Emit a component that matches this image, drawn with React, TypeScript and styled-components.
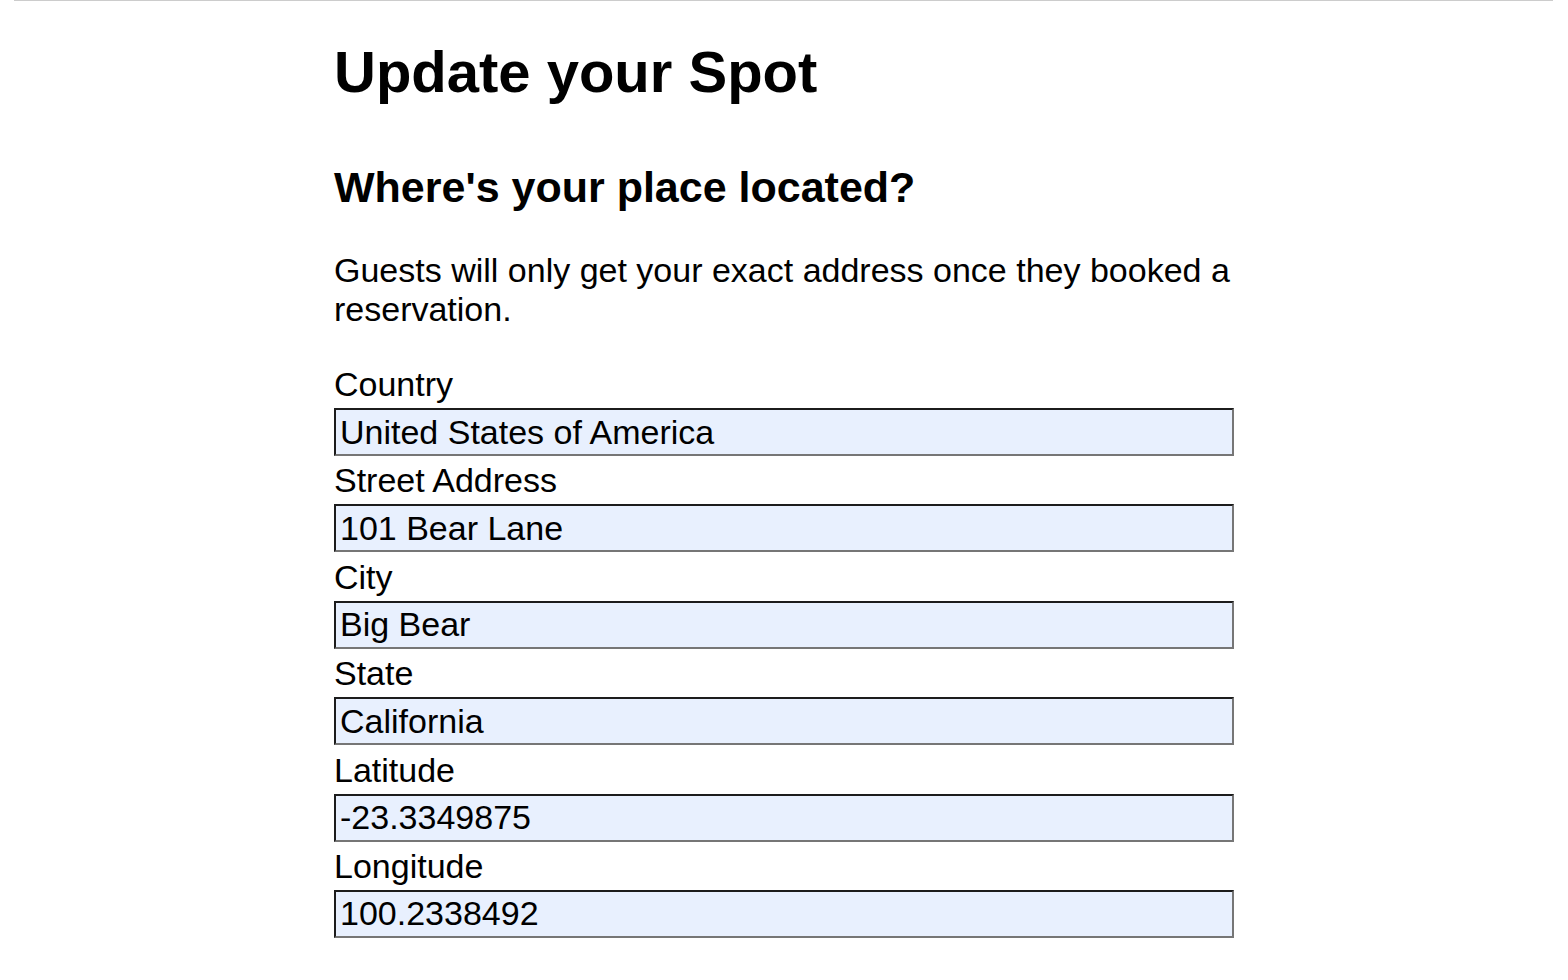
import styled, { createGlobalStyle } from "styled-components";

const GlobalStyle = createGlobalStyle`
    body {
        margin: 0;
        background: #ffffff;
        color: #000000;
        font-family: "Liberation Sans", Arial, Helvetica, sans-serif;
    }
`;

const TopRule = styled.div`
    margin: 0 15px 0 14px;
    border-top: 1px solid #cccccc;
`;

const Wrapper = styled.div`
    width: 900px;
    margin: 0 auto;
`;

const Title = styled.h1`
    margin: 38px 0 0;
    font-size: 58px;
    line-height: 66px;
    font-weight: 700;
`;

const SubTitle = styled.h2`
    margin: 57px 0 0;
    font-size: 43px;
    line-height: 50px;
    font-weight: 700;
`;

const Note = styled.p`
    margin: 39px 0 0;
    font-size: 34px;
    line-height: 39px;
`;

const Form = styled.form`
    display: flex;
    flex-direction: column;
    gap: 4.4px;
    margin-top: 35px;
`;

const Field = styled.div`
    display: flex;
    flex-direction: column;
    gap: 4px;
`;

const Label = styled.label`
    display: block;
    font-size: 34px;
    line-height: 40px;
`;

const Input = styled.input`
    box-sizing: border-box;
    width: 100%;
    height: 48px;
    margin: 0;
    padding: 0 4px;
    border-style: solid;
    border-width: 2px;
    border-color: #1c1c1c #767676 #767676 #1c1c1c;
    border-radius: 0;
    background: #e8f0fe;
    color: #000000;
    font-family: "Liberation Sans", Arial, Helvetica, sans-serif;
    font-size: 34px;
    outline: none;
`;

const fields = [
    { id: "country", label: "Country", value: "United States of America" },
    { id: "address", label: "Street Address", value: "101 Bear Lane" },
    { id: "city", label: "City", value: "Big Bear" },
    { id: "state", label: "State", value: "California" },
    { id: "lat", label: "Latitude", value: "-23.3349875" },
    { id: "lng", label: "Longitude", value: "100.2338492" },
];

function App() {
    return (
        <>
            <GlobalStyle />
            <TopRule />
            <Wrapper>
                <Title>Update your Spot</Title>
                <SubTitle>Where's your place located?</SubTitle>
                <Note>Guests will only get your exact address once they booked a reservation.</Note>
                <Form onSubmit={(e) => e.preventDefault()}>
                    {fields.map((field) => (
                        <Field key={field.id}>
                            <Label htmlFor={field.id}>{field.label}</Label>
                            <Input id={field.id} type="text" defaultValue={field.value} />
                        </Field>
                    ))}
                </Form>
            </Wrapper>
        </>
    );
}

export default App;
